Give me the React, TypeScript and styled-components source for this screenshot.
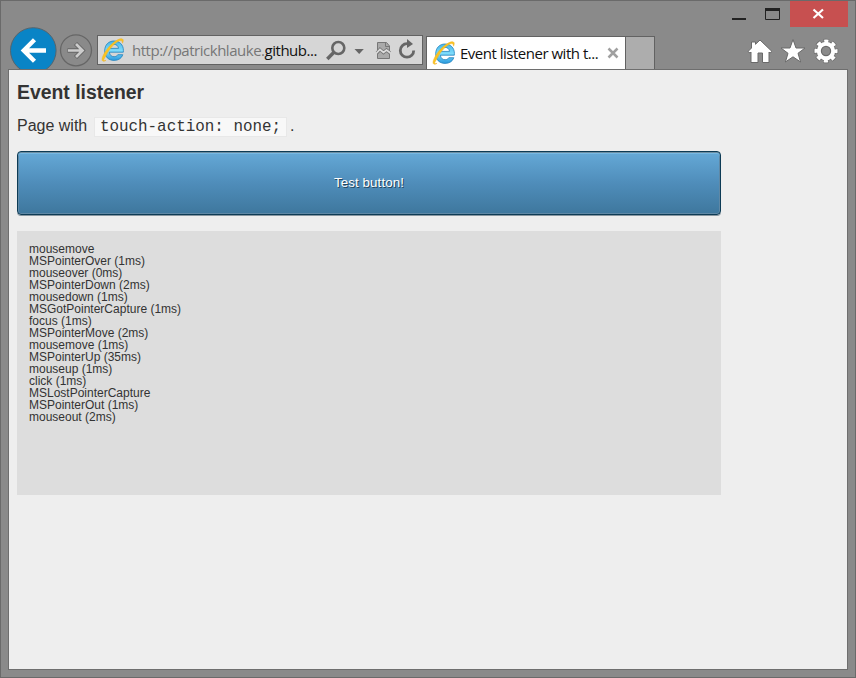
import React from "react";
import styled, { createGlobalStyle } from "styled-components";

const GlobalStyle = createGlobalStyle`
  *, *::before, *::after { box-sizing: border-box; }
  body { margin: 0; }
  svg { display: block; flex: none; }
`;

const Window = styled.div`
  width: 856px;
  height: 678px;
  display: flex;
  flex-direction: column;
  padding: 0 7px 7px;
  background: #8a8a8a;
  border: 1px solid #6a6a6a;
  overflow: hidden;
`;

const TitleBar = styled.header`
  display: flex;
  justify-content: flex-end;
  height: 26px;
  flex: none;
`;

const WindowButton = styled.button<{ $width: number; $danger?: boolean }>`
  width: ${(p) => p.$width}px;
  height: 26px;
  padding: 0;
  border: 0;
  background: ${(p) => (p.$danger ? "#c75050" : "transparent")};
`;

const NavBar = styled.nav`
  display: flex;
  align-items: flex-start;
  height: 42px;
  flex: none;
  padding-left: 2px;
`;

const RoundButton = styled.button<{ $top: number; $size: number }>`
  width: ${(p) => p.$size}px;
  height: ${(p) => p.$size}px;
  margin: ${(p) => p.$top}px 2px 0 0;
  padding: 0;
  border: 0;
  background: none;
  flex: none;
`;

const AddressBar = styled.div`
  display: flex;
  align-items: center;
  width: 326px;
  height: 30px;
  margin: 8px 3px 0 2px;
  padding-left: 3px;
  border: 1px solid #626262;
  background: #d6d6d6;
  flex: none;
`;

const Url = styled.span`
  width: 200px;
  padding-left: 7px;
  font: 15px/28px "Open Sans", sans-serif;
  letter-spacing: -0.48px;
  color: #777;
  white-space: nowrap;
`;

const Host = styled.span`
  color: #111;
`;

const Tab = styled.div`
  display: flex;
  align-items: center;
  width: 200px;
  height: 33px;
  margin-top: 9px;
  padding-left: 5px;
  border: 1px solid #626262;
  border-bottom: 0;
  background: #fff;
  flex: none;
`;

const TabTitle = styled.span`
  width: 151px;
  padding-left: 4px;
  font: 15px/32px "Open Sans", sans-serif;
  letter-spacing: -0.49px;
  color: #111;
  white-space: nowrap;
`;

const NewTab = styled.div`
  width: 29px;
  height: 33px;
  margin-top: 9px;
  border: 1px solid #626262;
  border-width: 1px 1px 0 0;
  background: #adadad;
`;

const Tools = styled.div`
  display: flex;
  gap: 7px;
  margin: 11px 9px 0 auto;
`;

const Page = styled.main`
  position: relative;
  flex: 1;
  padding: 10px 8px;
  border: 1px solid #6e6e6e;
  background: #eee;
  color: #333;
  font-family: "Liberation Sans", Arial, sans-serif;
`;

const Heading = styled.h1`
  margin: 0;
  font-size: 19.4px;
  line-height: 24px;
`;

const Intro = styled.p`
  margin: 10px 0 0;
  height: 24px;
  font-size: 16px;
  line-height: 24px;
`;

const Code = styled.code`
  margin: 0 3px 0 2.400px;
  padding: 0 4.800px;
  border: 1px solid #e8e8e8;
  background: #f8f8f8;
  font: 15.9px "Liberation Mono", "Courier New", monospace;
`;

const TestButton = styled.button`
  display: block;
  width: 704px;
  height: 64px;
  margin: 13px 0 0;
  padding: 0 0 1px;
  border: 1px solid #0d3b55;
  border-radius: 4px;
  background: linear-gradient(#65a9d7, #4f8dba 50%, #3e779d);
  box-shadow: 0 1px 0 #8796a0, inset 0 1px 0 #6d8ea3, inset 0 2px 0 #76b8e2, inset 0 0 0 1px #5f88a5;
  color: #fff;
  font: 13.33px "Liberation Sans", Arial, sans-serif;
  letter-spacing: 0.1px;
  text-shadow: 1px 1px 0 #24465c;
`;

const EventLog = styled.ul`
  width: 704px;
  height: 264px;
  margin: 16px 0 0;
  padding: 12px;
  list-style: none;
  background: #ddd;
  font-size: 12px;
  line-height: 12px;
`;

const events = [
  "mousemove",
  "MSPointerOver (1ms)",
  "mouseover (0ms)",
  "MSPointerDown (2ms)",
  "mousedown (1ms)",
  "MSGotPointerCapture (1ms)",
  "focus (1ms)",
  "MSPointerMove (2ms)",
  "mousemove (1ms)",
  "MSPointerUp (35ms)",
  "mouseup (1ms)",
  "click (1ms)",
  "MSLostPointerCapture",
  "MSPointerOut (1ms)",
  "mouseout (2ms)",
];

function BrowserLogo({ id }: { id: string }) {
  return (
    <svg width="24" height="26" viewBox="0 0 24 26">
      <defs>
        <linearGradient id={id} x1="0" y1="0" x2="0" y2="1">
          <stop offset="0" stopColor="#45b5e8" />
          <stop offset="0.5" stopColor="#7fdcfb" />
          <stop offset="1" stopColor="#2a9ade" />
        </linearGradient>
      </defs>
      <path
        d="M22.300 15.200H8.400c.2 2.800 2 4.500 4.700 4.500 1.700 0 3-.7 3.700-2H21.800c-1.200 3.600-4.400 5.700-8.700 5.700-5.700 0-9.400-3.800-9.400-9.500C3.700 7.900 7.500 4 13 4s9.400 3.800 9.400 9.400zM8.500 11.400h9c-.2-2.500-1.900-4-4.400-4S8.700 8.900 8.500 11.400z"
        fill={`url(#${id})`}
        stroke="#2282bd"
        strokeWidth="0.8"
      />
      <path
        d="M4.500 19.500C1.700 23.400 2.400 24.300 5 23.300C1.800 25.700-.4 23.700 2.200 18.400C5.500 11.500 12.500 4.200 18.300 2.100C22.300.7 23 3.100 21.500 6.200C21.500 3.400 19.900 2.900 16.900 4.600C12.500 7.100 7.600 13 4.500 19.500Z"
        fill="#fbc321"
        stroke="#efb020"
        strokeWidth="0.5"
      />
    </svg>
  );
}

export default function App() {
  return (
    <>
      <GlobalStyle />
      <Window>
        <TitleBar>
          <WindowButton $width={34} aria-label="Minimize">
            <svg width="34" height="26"><path d="M8 18H22" stroke="#222" strokeWidth="2" /></svg>
          </WindowButton>
          <WindowButton $width={32} aria-label="Maximize">
            <svg width="32" height="26">
              <path d="M7.500 8V18.500H21.500V8" fill="none" stroke="#222" />
              <path d="M7 8.500H22" stroke="#222" strokeWidth="3" />
            </svg>
          </WindowButton>
          <WindowButton $width={58} $danger aria-label="Close">
            <svg width="58" height="26"><path d="M23.500 8.500L33 17M33 8.500L23.500 17" stroke="#fff" strokeWidth="2.200" /></svg>
          </WindowButton>
        </TitleBar>
        <NavBar>
          <RoundButton $size={47} $top={0} aria-label="Back">
            <svg width="47" height="47">
              <circle cx="23.300" cy="23.500" r="22.800" fill="#0984c6" stroke="#55646d" />
              <path d="M36 23.500H15M24.500 12.800L13.800 23.500L24.500 34.200" fill="none" stroke="#fff" strokeWidth="4.400" />
            </svg>
          </RoundButton>
          <RoundButton $size={34} $top={6} aria-label="Forward">
            <svg width="34" height="34">
              <circle cx="17" cy="17.300" r="15.500" fill="none" stroke="#666" strokeWidth="1.300" />
              <path d="M8.500 17.500H22M16.500 10.500L23.500 17.500L16.500 24.500" fill="none" stroke="#666" strokeWidth="4.500" />
              <path d="M9 17.500H22M17 11L23.500 17.500L17 24" fill="none" stroke="#ccc" strokeWidth="2.700" />
            </svg>
          </RoundButton>
          <AddressBar>
            <BrowserLogo id="address-logo" />
            <Url>http://patrickhlauke.<Host>github...</Host></Url>
            <svg width="97" height="28">
              <circle cx="13.300" cy="12" r="6" fill="none" stroke="#666" strokeWidth="2.600" />
              <path d="M8.700 16.500L2.300 23" stroke="#666" strokeWidth="3.400" />
              <path d="M29.500 13H38.800L34.200 18Z" fill="#666" />
              <path d="M52.500 6.500H61.500L64.500 10V22.500H52.500Z" fill="#aaa" stroke="#777" />
              <path d="M60.500 6.500V10.500H64.500" fill="none" stroke="#777" />
              <path d="M52 17L55 13.500L58.500 16.500L61.500 14L65 17" fill="none" stroke="#777" strokeWidth="3.400" />
              <path d="M51.500 17L55 13.500L58.500 16.500L61.500 14L65.500 17" fill="none" stroke="#ddd" strokeWidth="1.700" />
              <path d="M82 7.700A6.700 6.700 0 1 0 88.700 14.400" fill="none" stroke="#666" strokeWidth="2.800" />
              <path d="M82 3L88 8L82 12Z" fill="#666" />
            </svg>
          </AddressBar>
          <Tab>
            <BrowserLogo id="tab-logo" />
            <TabTitle>Event listener with t...</TabTitle>
            <svg width="12" height="12"><path d="M1.500 1.500L10.500 10.500M10.500 1.500L1.500 10.500" stroke="#a0a0a0" strokeWidth="2.500" /></svg>
          </Tab>
          <NewTab />
          <Tools>
            <svg width="26" height="26">
              <path d="M13 2L25 13.500L23 15L22 14V24.500H15.500V15H11V24.500H4V14L3 15L1 13.500L4.500 10V4H8.500V6.300Z" fill="#fff" stroke="#6a6a6a" />
            </svg>
            <svg width="26" height="26">
              <path d="M13 1.500L16 10H25L18 15.300L20.600 24L13 18.800L5.400 24L8 15.300L1 10H10Z" fill="#fff" stroke="#6a6a6a" />
            </svg>
            <svg width="26" height="26">
              <circle cx="13" cy="13" r="9.800" fill="none" stroke="#6a6a6a" strokeWidth="5" strokeDasharray="4.850 2.847" strokeDashoffset="2.425" />
              <circle cx="13" cy="13" r="7" fill="none" stroke="#6a6a6a" strokeWidth="6" />
              <circle cx="13" cy="13" r="9.800" fill="none" stroke="#fff" strokeWidth="3.500" strokeDasharray="4.100 3.597" strokeDashoffset="2.050" />
              <circle cx="13" cy="13" r="7.200" fill="none" stroke="#fff" strokeWidth="4" />
            </svg>
          </Tools>
        </NavBar>
        <Page>
          <Heading>Event listener</Heading>
          <Intro>Page with <Code>touch-action: none;</Code>.</Intro>
          <TestButton>Test button!</TestButton>
          <EventLog>{events.map((event) => <li key={event}>{event}</li>)}</EventLog>
        </Page>
      </Window>
    </>
  );
}
